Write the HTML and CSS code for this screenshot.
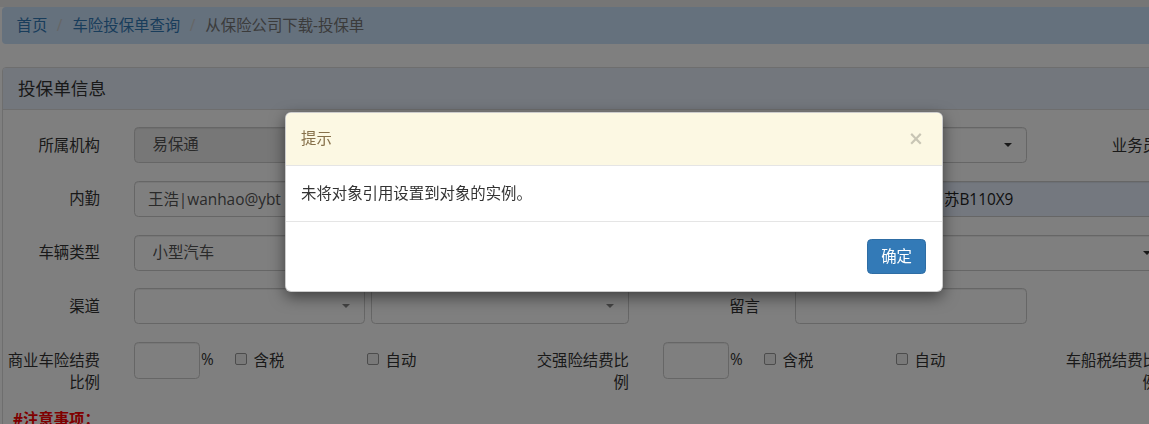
FILE: index.html
```html
<!DOCTYPE html>
<html lang="zh-CN">
<head>
<meta charset="utf-8">
<title>从保险公司下载-投保单</title>
<link rel="stylesheet" href="styles.css">
</head>
<body>
<div class="topbar"></div>
<div class="page">
  <ol class="breadcrumb">
    <li><a href="#">首页</a></li>
    <li><a href="#">车险投保单查询</a></li>
    <li class="active">从保险公司下载-投保单</li>
  </ol>

  <div class="panel">
    <div class="panel-heading"><h3 class="panel-title">投保单信息</h3></div>
    <div class="panel-body">

      <div class="form-group g1">
        <label class="control-label">所属机构</label>
        <div class="cell"><span class="select-wrap"><select class="form-control" disabled><option>易保通</option></select></span></div>
        <span class="control-label"></span>
        <div class="cell cell-r"><span class="select-wrap"><select class="form-control"><option></option></select></span></div>
        <label class="control-label">业务员</label>
      </div>

      <div class="form-group g2">
        <label class="control-label">内勤</label>
        <div class="cell"><input class="form-control text-input" type="text" value="王浩|wanhao@ybt"></div>
        <span class="control-label"></span>
        <div class="cell"><input class="form-control text-input autofill" type="text" value="苏B110X9"></div>
      </div>

      <div class="form-group g2">
        <label class="control-label">车辆类型</label>
        <div class="cell"><span class="select-wrap"><select class="form-control"><option>小型汽车</option></select></span></div>
        <span class="control-label"></span>
        <div class="cell"><span class="select-wrap"><select class="form-control"><option></option></select></span></div>
      </div>

      <div class="form-group g3">
        <label class="control-label">渠道</label>
        <div class="cell cell-a"><span class="select-wrap light"><select class="form-control"><option></option></select></span></div>
        <div class="cell cell-b"><span class="select-wrap light"><select class="form-control"><option></option></select></span></div>
        <label class="control-label">留言</label>
        <div class="cell cell-r"><input class="form-control text-input" type="text" value=""></div>
      </div>

      <div class="form-group g4">
        <label class="control-label">商业车险结费比例</label>
        <div class="cell inline"><input class="form-control short" type="text" value=""><span class="unit">%</span></div>
        <label class="check"><input type="checkbox">含税</label>
        <label class="check"><input type="checkbox">自动</label>
        <label class="control-label">交强险结费比例</label>
        <div class="cell inline"><input class="form-control short" type="text" value=""><span class="unit">%</span></div>
        <label class="check"><input type="checkbox">含税</label>
        <label class="check"><input type="checkbox">自动</label>
        <label class="control-label">车船税结费比例</label>
      </div>

      <p class="note">#注意事项：</p>
    </div>
  </div>
</div>

<div class="modal-backdrop"></div>
<div class="modal">
  <div class="modal-dialog">
    <div class="modal-header">
      <h4 class="modal-title">提示</h4>
      <button class="close" type="button">×</button>
    </div>
    <div class="modal-body">未将对象引用设置到对象的实例。</div>
    <div class="modal-footer">
      <button class="btn-primary" type="button">确定</button>
    </div>
  </div>
</div>
</body>
</html>
```

FILE: styles.css
```css
* { box-sizing: border-box; }

html, body {
  margin: 0;
  overflow: hidden;
}

body {
  font-family: "Open Sans", "Noto Sans CJK SC", sans-serif;
  font-size: 15.4px;
  line-height: 22px;
  color: #333;
  background: #fff;
}

.topbar {
  height: 7px;
  background: #ededed;
}

.page {
  width: 1226px;
  margin-left: 2px;
}

/* breadcrumb */
.breadcrumb {
  display: flex;
  list-style: none;
  margin: 0 0 23px;
  padding: 7.5px 14.5px;
  background: #cae2fb;
  border-radius: 4px;
}
.breadcrumb li + li::before {
  content: "/";
  color: #ccc;
  padding: 0 10px 0 9.5px;
}
.breadcrumb a {
  color: #337ab7;
  text-decoration: none;
}
.breadcrumb .active { color: #777; }

/* panel */
.panel {
  border: 1px solid #ddd;
  border-radius: 4px;
  background: #fff;
}
.panel-heading {
  height: 42px;
  padding: 10px 15px 0;
  background: #e6eefa;
  border-bottom: 1px solid #ddd;
  border-radius: 3px 3px 0 0;
}
.panel-title {
  margin: 0;
  font-size: 17.6px;
  line-height: 20px;
  font-weight: normal;
  color: #333;
}
.panel-body {
  padding: 17px 0 0 0;
}

/* form rows */
.form-group {
  display: grid;
  align-items: start;
  margin-bottom: 17.8px;
}
.g1 { grid-template-columns: 114px 529px 131px 267px 131px; }
.g2 { grid-template-columns: 114px 529px 267px 270px; }
.g3 { grid-template-columns: 114px 251px 278px 131px 267px; }
.g4 { grid-template-columns: 114px 101px 132px 182px 114px 101px 132px 182px 114px; }

.control-label {
  padding: 7.5px 17px 0 0;
  text-align: right;
  white-space: normal;
}
.g4 .control-label { padding-top: 8px; }

.cell { padding: 0 17px; }
.cell-r { padding: 0 17px 0 18px; }
.cell-a { padding: 0 3px 0 17px; }
.cell-b { padding: 0 17px 0 3px; }

.form-control {
  display: block;
  width: 100%;
  height: 36px;
  margin: 0;
  padding: 0 13px;
  font: inherit;
  color: #555;
  background: #fff;
  border: 1px solid #ccc;
  border-radius: 4.4px;
  box-shadow: inset 0 1px 1px rgba(0, 0, 0, .075);
  outline: none;
}
select.form-control {
  appearance: none;
  -webkit-appearance: none;
  padding-left: 17.5px;
}
select.form-control:disabled {
  background: #eee;
  opacity: 1;
  color: #555;
}
.autofill {
  background: #e8f0fe;
  color: #222;
}

.select-wrap {
  position: relative;
  display: block;
}
.select-wrap::after {
  content: "";
  position: absolute;
  right: 15px;
  top: 16px;
  border-left: 4px solid transparent;
  border-right: 4px solid transparent;
  border-top: 4.5px solid #333;
}
.select-wrap.light::after { border-top-color: #888; }

.inline {
  display: flex;
  align-items: flex-start;
}
.form-control.short {
  width: 66px;
  height: 37px;
}
.unit {
  padding-top: 7px;
  margin-left: 1px;
}

.check {
  display: flex;
  align-items: flex-start;
  padding: 8px 0 0 17px;
}
.check input {
  appearance: none;
  -webkit-appearance: none;
  width: 12px;
  height: 12px;
  margin: 2.5px 6.5px 0 0;
  border: 1px solid #999;
  border-radius: 2px;
  background: #f3f3f3;
}

.note {
  margin: 0 0 0 10px;
  line-height: 16px;
  font-weight: bold;
  color: #f00;
}

/* modal */
.modal-backdrop {
  position: fixed;
  inset: 0;
  background: rgba(0, 0, 0, .5);
}
.modal {
  position: fixed;
  top: 0;
  left: 0;
  width: 1228px;
  height: 100%;
}
.modal-dialog {
  width: 658px;
  margin: 112px auto 0;
  background: #fff;
  border: 1px solid rgba(0, 0, 0, .2);
  border-radius: 6px;
  box-shadow: 0 5px 15px rgba(0, 0, 0, .5);
  overflow: hidden;
}
.modal-header {
  height: 53px;
  display: flex;
  align-items: center;
  justify-content: space-between;
  padding: 0 15px;
  background: #fcf8e3;
  border-bottom: 1px solid #e5e5e5;
}
.modal-title {
  margin: 0;
  font-size: 15.4px;
  line-height: 22px;
  font-weight: normal;
  color: #86704a;
}
.close {
  margin: -2px 3px 0 0;
  padding: 0;
  border: 0;
  background: none;
  font-family: "DejaVu Sans", sans-serif;
  font-size: 19px;
  font-weight: bold;
  line-height: 1;
  color: #000;
  opacity: .2;
}
.modal-body {
  height: 55px;
  padding: 17px 15px 16px;
  line-height: 22px;
  color: #333;
}
.modal-footer {
  display: flex;
  justify-content: flex-end;
  padding: 17px 16px 17px;
  border-top: 1px solid #e5e5e5;
}
.btn-primary {
  height: 35px;
  padding: 0 13px;
  font: inherit;
  line-height: 33px;
  color: #fff;
  background: #337ab7;
  border: 1px solid #2e6da4;
  border-radius: 4.4px;
}
```
